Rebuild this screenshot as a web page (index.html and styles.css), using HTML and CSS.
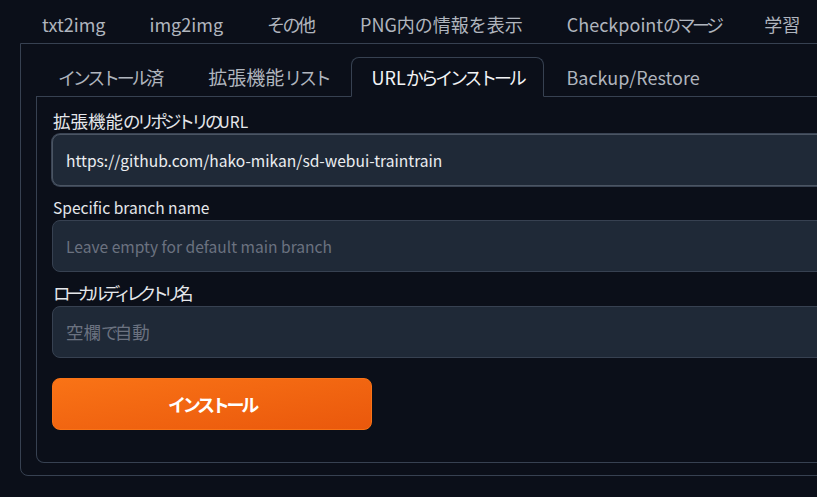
FILE: index.html
```html
<!DOCTYPE html>
<html lang="ja">
<head>
<meta charset="utf-8">
<title>Extensions</title>
<link rel="stylesheet" href="styles.css">
</head>
<body>
<div class="app">
  <nav class="tabbar top-tabs">
    <button class="tab">txt2img</button>
    <button class="tab">img2img</button>
    <button class="tab"><span class="k soft">その</span>他</button>
    <button class="tab">PNG内の情報を表示</button>
    <button class="tab">Checkpoint<span class="k wide">のマージ</span></button>
    <button class="tab">学習</button>
  </nav>
  <div class="outer-panel">
    <nav class="tabbar inner-tabs">
      <button class="tab"><span class="k">インストール</span>済</button>
      <button class="tab"><span class="j">拡張機能</span><span class="k">リスト</span></button>
      <button class="tab active">URL<span class="k">からインストール</span></button>
      <button class="tab">Backup/Restore</button>
    </nav>
    <div class="inner-panel">
      <div class="field">
        <label class="label"><span class="j">拡張機能<span class="k">のリポジトリの</span></span>URL</label>
        <div class="input focused">https://github.com/hako-mikan/sd-webui-traintrain</div>
      </div>
      <div class="field">
        <label class="label">Specific branch name</label>
        <div class="input placeholder">Leave empty for default main branch</div>
      </div>
      <div class="field">
        <label class="label"><span class="j"><span class="k tight">ローカルディレクトリ</span>名</span></label>
        <div class="input placeholder"><span class="j">空欄<span class="k">で</span>自動</span></div>
      </div>
      <button class="primary"><span class="k">インストール</span></button>
    </div>
  </div>
</div>
</body>
</html>
```

FILE: styles.css
```css
html, body {
  margin: 0;
  padding: 0;
  background: #0b0f19;
  overflow: hidden;
}
body {
  font-family: "Noto Sans CJK JP", "Noto Sans", sans-serif;
  color: #e5e7eb;
}
.k {
  letter-spacing: -0.18em;
}
.k.soft {
  letter-spacing: -0.14em;
}
.k.wide {
  letter-spacing: -0.2em;
}
.app {
  width: 1000px;
}
.tabbar {
  display: flex;
  align-items: flex-end;
}
.tab {
  font-family: inherit;
  font-size: 18px;
  line-height: 24px;
  background: transparent;
  color: #b0b5be;
  border: 1px solid transparent;
  padding: 0 21px;
  margin: 0;
  cursor: pointer;
  white-space: nowrap;
}
.tab .j {
  font-size: 19px;
}
.top-tabs {
  height: 43px;
  padding-left: 20px;
}
.top-tabs .tab {
  height: 43px;
  padding-top: 11px;
  padding-bottom: 8px;
}
.outer-panel {
  margin-left: 20px;
  border: 1px solid #374151;
  border-radius: 0 0 0 8px;
  padding: 13px 0 12px 15px;
}
.inner-tabs {
  border-bottom: 1px solid #374151;
  height: 39px;
}
.inner-tabs .tab {
  height: 40px;
  margin-bottom: -1px;
  border-radius: 8px 8px 0 0;
}
.inner-tabs .tab.active {
  border-color: #374151;
  border-bottom-color: #0b0f19;
  background: #0b0f19;
  color: #f3f4f6;
  padding: 0 20px;
}
.inner-panel {
  border: 1px solid #374151;
  border-top: none;
  border-radius: 0 0 0 8px;
  padding: 13px 15px 32px 15px;
  display: flex;
  flex-direction: column;
  gap: 10px;
}
.field {
  display: flex;
  flex-direction: column;
}
.label {
  font-size: 15.6px;
  line-height: 22px;
  color: #e5e7eb;
  margin-bottom: 2px;
  padding-left: 1px;
  white-space: nowrap;
}
.label .j,
.input .j {
  font-size: 17.5px;
}
.label .k {
  letter-spacing: -0.22em;
}
.label .k.tight {
  letter-spacing: -0.29em;
}
.input .k {
  letter-spacing: -0.22em;
}
.input {
  box-sizing: border-box;
  height: 52px;
  border: 1px solid #374151;
  border-radius: 8px;
  background: #1f2937;
  padding: 0 13px;
  font-size: 15.6px;
  line-height: 50px;
  color: #eceef1;
  white-space: nowrap;
}
.input.focused {
  border-color: #4b5563;
  box-shadow: 0 0 0 1px #3a4454;
}
.input.placeholder {
  color: #6b7280;
}
.primary {
  margin-top: 10px;
  align-self: flex-start;
  width: 320px;
  height: 52px;
  border: 1px solid #f97316;
  border-radius: 8px;
  background: linear-gradient(to bottom right, #f97316, #ea580c);
  color: #ffffff;
  font-family: inherit;
  font-size: 18px;
  font-weight: 700;
  cursor: pointer;
}
```
